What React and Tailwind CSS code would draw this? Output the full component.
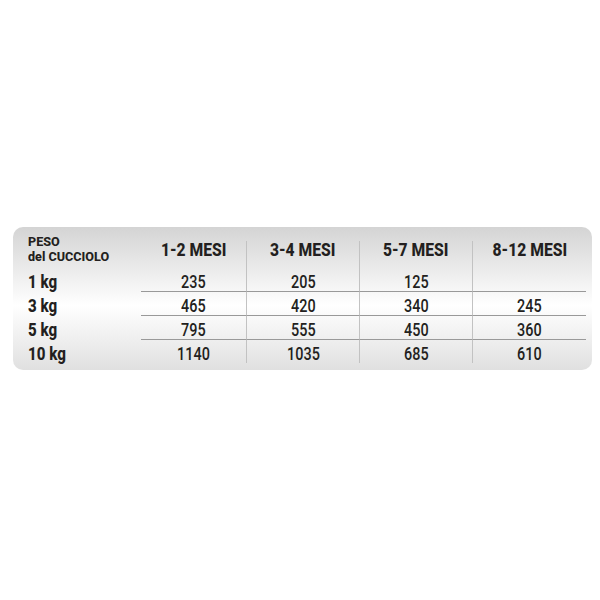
import React from "react"

const months = ["1-2 MESI", "3-4 MESI", "5-7 MESI", "8-12 MESI"]

const rows = [
	{ peso: "1 kg", values: ["235", "205", "125", ""] },
	{ peso: "3 kg", values: ["465", "420", "340", "245"] },
	{ peso: "5 kg", values: ["795", "555", "450", "360"] },
	{ peso: "10 kg", values: ["1140", "1035", "685", "610"] },
]

const colWidths = ["w-[105px]", "w-[113px]", "w-[113px]", "w-[114px]"]

export default function App() {
	return (
		<div className="w-[600px] h-[600px] bg-white pt-[227px] pl-[13px] text-[#231f20] font-['Roboto',sans-serif]">
			<div className="w-[579px] h-[143px] rounded-[10px] bg-gradient-to-b from-[#d4d4d4] via-white via-55% to-[#e0e0e0] flex flex-col pt-[14px]">
				{/* header */}
				<div className="flex h-[26px]">
					<div className="w-[128px] pl-[15px] -mt-[7px] font-extrabold text-[13px] leading-[15px]">
						<div className="origin-left scale-x-[0.97]">PESO</div>
						<div className="origin-left scale-x-[0.97] whitespace-nowrap">del CUCCIOLO</div>
					</div>
					{months.map((m, i) => (
						<div
							key={m}
							className={`${colWidths[i]} h-full flex justify-center font-extrabold text-[18px] leading-[18px] ${
								i > 0 ? "border-l border-[#c2c2c2]" : ""
							}`}
						>
							<span className="inline-block whitespace-nowrap scale-x-[0.87]">{m}</span>
						</div>
					))}
				</div>
				{rows.map((row, r) => (
					<div key={row.peso} className="flex h-[24px]">
						<div className="w-[128px] pl-[15px] pt-[5px] flex items-center font-extrabold text-[18px] leading-[18px]">
							<span className="inline-block origin-left scale-x-[0.84]">{row.peso}</span>
						</div>
						{row.values.map((v, i) => (
							<div
								key={i}
								className={`${colWidths[i]} pt-[5px] flex items-center justify-center font-medium text-[18px] leading-[18px] ${
									i > 0 ? "border-l border-[#c2c2c2]" : ""
								} ${r > 0 ? "border-t border-t-[#999999]" : ""}`}
							>
								<span className="inline-block scale-x-[0.8]">{v}</span>
							</div>
						))}
					</div>
				))}
			</div>
		</div>
	)
}
